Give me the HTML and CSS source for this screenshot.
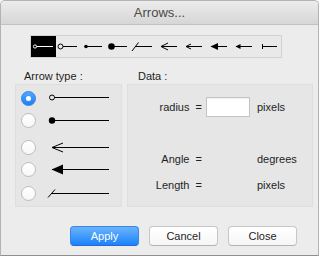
FILE: index.html
```html
<!DOCTYPE html>
<html lang="en">
<head>
<meta charset="UTF-8">
<title>Arrows...</title>
<link rel="stylesheet" href="styles.css">
</head>
<body>

<div class="window">
    <div class="titlebar">Arrows...</div>

    <div class="toolbar">
        <span class="tool selected">
            <svg width="25" height="21"><circle cx="4" cy="10.5" r="1.6" fill="#000" stroke="#fff"/><line x1="5.6" y1="10.5" x2="22" y2="10.5" stroke="#fff"/></svg>
        </span>
        <span class="tool">
            <svg width="25" height="21"><circle cx="4.5" cy="10.5" r="2.5" fill="none" stroke="#000"/><line x1="7" y1="10.5" x2="21" y2="10.5" stroke="#000"/></svg>
        </span>
        <span class="tool">
            <svg width="25" height="21"><circle cx="5" cy="10.5" r="1.8" fill="#000"/><line x1="5" y1="10.5" x2="21" y2="10.5" stroke="#000"/></svg>
        </span>
        <span class="tool">
            <svg width="25" height="21"><circle cx="5.5" cy="10.5" r="3.3" fill="#000"/><line x1="5" y1="10.5" x2="21" y2="10.5" stroke="#000"/></svg>
        </span>
        <span class="tool">
            <svg width="25" height="21"><line x1="1" y1="15" x2="7.5" y2="6.5" stroke="#000"/><line x1="4" y1="10.5" x2="21" y2="10.5" stroke="#000"/></svg>
        </span>
        <span class="tool">
            <svg width="25" height="21"><polyline points="12,7 5,10.5 12,14" fill="none" stroke="#000"/><line x1="5" y1="10.5" x2="21" y2="10.5" stroke="#000"/></svg>
        </span>
        <span class="tool">
            <svg width="25" height="21"><polyline points="10,8 5,10.5 10,13" fill="none" stroke="#000"/><line x1="5" y1="10.5" x2="21" y2="10.5" stroke="#000"/></svg>
        </span>
        <span class="tool">
            <svg width="25" height="21"><polygon points="4.5,10.5 12,7 12,14" fill="#000"/><line x1="5" y1="10.5" x2="21" y2="10.5" stroke="#000"/></svg>
        </span>
        <span class="tool">
            <svg width="25" height="21"><polygon points="4.5,10.5 9.5,8 9.5,13" fill="#000"/><line x1="5" y1="10.5" x2="21" y2="10.5" stroke="#000"/></svg>
        </span>
        <span class="tool">
            <svg width="25" height="21"><line x1="6.5" y1="8" x2="6.5" y2="13" stroke="#000"/><line x1="6" y1="10.5" x2="21" y2="10.5" stroke="#000"/></svg>
        </span>
    </div>

    <div class="panels">
        <div class="panel panel-type">
            <div class="panel-label">Arrow type :</div>
            <div class="panel-box type-list">
                <div class="type-row">
                    <span class="radio checked"></span>
                    <svg width="66" height="14"><circle cx="7" cy="6.5" r="2.5" fill="none" stroke="#000"/><line x1="9.5" y1="6.5" x2="64" y2="6.5" stroke="#000"/></svg>
                </div>
                <div class="type-row">
                    <span class="radio"></span>
                    <svg width="66" height="14"><circle cx="7" cy="7.5" r="3.2" fill="#000"/><line x1="7" y1="7.5" x2="64" y2="7.5" stroke="#000"/></svg>
                </div>
                <div class="type-row gap-lg">
                    <span class="radio"></span>
                    <svg width="66" height="14"><polyline points="18,3 7,7.5 18,12" fill="none" stroke="#000"/><line x1="7" y1="7.5" x2="64" y2="7.5" stroke="#000"/></svg>
                </div>
                <div class="type-row">
                    <span class="radio"></span>
                    <svg width="66" height="14"><polygon points="6.5,7.5 18,2.5 18,12.5" fill="#000"/><line x1="7" y1="7.5" x2="64" y2="7.5" stroke="#000"/></svg>
                </div>
                <div class="type-row gap-sm">
                    <span class="radio"></span>
                    <svg width="66" height="14"><line x1="3" y1="11.5" x2="10" y2="3.5" stroke="#000"/><line x1="6" y1="7.5" x2="64" y2="7.5" stroke="#000"/></svg>
                </div>
            </div>
        </div>

        <div class="panel panel-data">
            <div class="panel-label">Data :</div>
            <div class="panel-box data-list">
                <div class="data-row">
                    <span class="data-name">radius&nbsp; =</span>
                    <input class="data-input" type="text">
                    <span class="data-unit">pixels</span>
                </div>
                <div class="data-row spaced">
                    <span class="data-name">Angle&nbsp; =</span>
                    <span class="data-value"></span>
                    <span class="data-unit">degrees</span>
                </div>
                <div class="data-row">
                    <span class="data-name">Length&nbsp; =</span>
                    <span class="data-value"></span>
                    <span class="data-unit">pixels</span>
                </div>
            </div>
        </div>
    </div>

    <div class="buttons">
        <button class="btn btn-primary" type="button">Apply</button>
        <button class="btn" type="button">Cancel</button>
        <button class="btn" type="button">Close</button>
    </div>
</div>

</body>
</html>
```

FILE: styles.css
```css
body {
    margin: 0;
    padding: 0;
    background-color: #f6f6f6;
    font-family: "Liberation Sans", Arial, sans-serif;
    font-size: 11px;
    color: #1e1e1e;
}

.window {
    width: 319px;
    height: 256px;
    box-sizing: border-box;
    border: 1px solid #b3b3b3;
    border-bottom-color: #8e8e8e;
    border-radius: 5px 5px 0 0;
    background-color: #ececec;
    overflow: hidden;
}

.titlebar {
    height: 23px;
    line-height: 23px;
    text-align: center;
    font-size: 13px;
    color: #4a4a4a;
    background: linear-gradient(#ececec, #d6d6d6);
    border-bottom: 1px solid #c2c2c2;
}

.toolbar {
    display: flex;
    width: max-content;
    margin: 10px 0 0 29px;
    border: 1px solid #d2d2d2;
    background-color: #e9e9e9;
}

.tool {
    display: block;
    width: 25px;
    height: 21px;
}

.tool svg {
    display: block;
}

.tool.selected {
    background-color: #000;
}

.panels {
    display: flex;
    gap: 5px;
    margin: 11px 0 0 14px;
}

.panel-label {
    height: 14px;
    line-height: 14px;
    margin-bottom: 1px;
}

.panel-type {
    width: 107px;
}

.panel-type .panel-label {
    padding-left: 9px;
}

.panel-data {
    width: 186px;
}

.panel-data .panel-label {
    padding-left: 11px;
}

.panel-box {
    box-sizing: border-box;
    height: 123px;
    border: 1px solid #dedede;
    background-color: #e6e6e6;
}

.type-list {
    padding-top: 2px;
}

.type-row {
    display: flex;
    align-items: center;
    height: 22px;
}

.type-row.gap-lg {
    margin-top: 5px;
}

.type-row.gap-sm {
    margin-top: 2px;
}

.type-row svg {
    display: block;
    margin-left: 9px;
}

.radio {
    position: relative;
    width: 15px;
    height: 15px;
    margin-left: 5px;
    box-sizing: border-box;
    border-radius: 50%;
    border: 1px solid #bcbcbc;
    background: linear-gradient(#ffffff, #f7f7f7);
}

.radio.checked {
    border-color: #2d83ee;
    background: linear-gradient(#52a8fb, #1c7ff5);
}

.radio.checked::after {
    content: "";
    position: absolute;
    left: 4px;
    top: 4px;
    width: 5px;
    height: 5px;
    border-radius: 50%;
    background-color: #fff;
}

.data-list {
    padding-top: 12px;
}

.data-row {
    display: flex;
    align-items: center;
    height: 20px;
    margin-bottom: 6px;
}

.data-row.spaced {
    margin-top: 32px;
}

.data-name {
    width: 74px;
    text-align: right;
}

.data-input,
.data-value {
    box-sizing: border-box;
    width: 44px;
    height: 20px;
    margin-left: 4px;
}

.data-input {
    padding: 0;
    border: 1px solid #c3c3c3;
    background-color: #fff;
    box-shadow: inset 0 1px 1px rgba(0, 0, 0, 0.06);
}

.data-unit {
    margin-left: 7px;
}

.buttons {
    display: flex;
    justify-content: flex-end;
    gap: 10px;
    margin-top: 19px;
    padding-right: 21px;
}

.btn {
    width: 69px;
    height: 20px;
    padding: 0;
    border: 1px solid #c6c6c6;
    border-bottom-color: #b3b3b3;
    border-radius: 4px;
    background: linear-gradient(#ffffff, #f6f6f6);
    font-family: "Liberation Sans", Arial, sans-serif;
    font-size: 11px;
    color: #1e1e1e;
}

.btn-primary {
    border-color: #3a86e6;
    border-bottom-color: #2468d3;
    background: linear-gradient(#6ab4fb, #1a82fb);
    color: #fff;
}
```
